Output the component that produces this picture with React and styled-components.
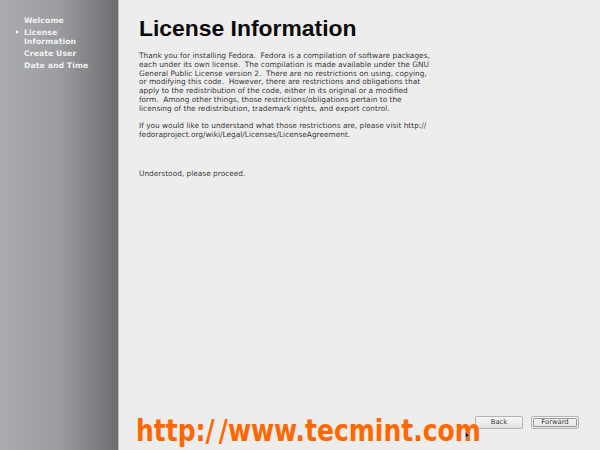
import styled, { createGlobalStyle } from 'styled-components';

const GlobalStyle = createGlobalStyle`
    html, body {
        margin: 0;
        padding: 0;
        width: 600px;
        height: 450px;
        overflow: hidden;
    }
    #root {
        height: 100%;
    }
`;

const Screen = styled.div`
    position: relative;
    display: flex;
    width: 600px;
    height: 450px;
    font-family: 'DejaVu Sans', sans-serif;
`;

const Sidebar = styled.nav`
    width: 119px;
    flex-shrink: 0;
    border-right: 1px solid #bdbdbf;
    background: linear-gradient(to right, #abacaf 0%, #9c9da0 50%, #6c6d6f 100%);
    padding: 15.5px 0 0 24px;
    box-sizing: border-box;
    display: flex;
    flex-direction: column;
    gap: 3.2px;
`;

const NavItem = styled.div`
    position: relative;
    font-size: 7.7px;
    font-weight: bold;
    line-height: 9px;
    color: #f1f1f1;
    letter-spacing: 0.1px;

    &::before {
        content: '';
        display: ${(p) => (p.$active ? 'block' : 'none')};
        position: absolute;
        left: -8px;
        top: 2px;
        border-left: 3px solid #f4f4f4;
        border-top: 2.5px solid transparent;
        border-bottom: 2.5px solid transparent;
    }
`;

const Content = styled.main`
    flex: 1;
    background: #ededed;
    padding: 15px 21px 21px 20px;
    display: flex;
    flex-direction: column;
`;

const Title = styled.h1`
    margin: 0 0 11px;
    font-family: 'Liberation Sans', Arial, sans-serif;
    font-size: 22.9px;
    font-weight: bold;
    line-height: 26px;
    color: #0a0a0a;
`;

const Paragraph = styled.p`
    margin: 0 0 ${(p) => p.$gap || 8.8}px;
    font-size: 7.4px;
    line-height: 8.8px;
    color: #3a3a3a;
    white-space: pre;
`;

const Line = styled.span`
    display: block;
`;

const Footer = styled.div`
    margin-top: auto;
    display: flex;
    justify-content: flex-end;
    gap: 8px;
`;

const Button = styled.button`
    position: relative;
    width: 48px;
    height: 13px;
    padding: 0;
    border: 1px solid #b4b4b4;
    border-radius: 2px;
    background: linear-gradient(to bottom, #f7f7f7, #e2e2e2);
    font-family: 'DejaVu Sans', sans-serif;
    font-size: 6.8px;
    line-height: 11px;
    color: #404040;

    &::after {
        content: '';
        display: ${(p) => (p.$focused ? 'block' : 'none')};
        position: absolute;
        inset: 1px;
        border: 1px solid #9a9a9a;
        border-radius: 1px;
    }
`;

const Watermark = styled.div`
    position: absolute;
    left: 136px;
    top: 419px;
    font-family: 'DejaVu Sans', sans-serif;
    font-weight: bold;
    font-size: 25px;
    line-height: 30px;
    color: #ff6700;
    transform: scaleY(1.2);
    transform-origin: left bottom;
    white-space: pre;
`;

const SlashGap = styled.span`
    margin-left: 4px;
`;

const Cursor = styled.svg`
    position: absolute;
    left: 465px;
    top: 431px;
`;

const licenseLines = [
    'Thank you for installing Fedora.  Fedora is a compilation of software packages,',
    'each under its own license.  The compilation is made available under the GNU',
    'General Public License version 2.  There are no restrictions on using, copying,',
    'or modifying this code.  However, there are restrictions and obligations that',
    'apply to the redistribution of the code, either in its original or a modified',
    'form.  Among other things, those restrictions/obligations pertain to the',
    'licensing of the redistribution, trademark rights, and export control.',
];

const visitLines = [
    'If you would like to understand what those restrictions are, please visit http://',
    'fedoraproject.org/wiki/Legal/Licenses/LicenseAgreement.',
];

export default function App() {
    return (
        <Screen>
            <GlobalStyle />
            <Sidebar>
                <NavItem>Welcome</NavItem>
                <NavItem $active>
                    License
                    <br />
                    Information
                </NavItem>
                <NavItem>Create User</NavItem>
                <NavItem>Date and Time</NavItem>
            </Sidebar>
            <Content>
                <Title>License Information</Title>
                <Paragraph>
                    {licenseLines.map((l) => (
                        <Line key={l}>{l}</Line>
                    ))}
                </Paragraph>
                <Paragraph $gap={30.4}>
                    {visitLines.map((l) => (
                        <Line key={l}>{l}</Line>
                    ))}
                </Paragraph>
                <Paragraph>Understood, please proceed.</Paragraph>
                <Footer>
                    <Button>Back</Button>
                    <Button $focused>Forward</Button>
                </Footer>
            </Content>
            <Watermark>
                http:/<SlashGap>/</SlashGap>www.tecmint.com
            </Watermark>
            <Cursor width="5" height="9" viewBox="0 0 5 9">
                <path d="M0.5 0.5 L0.5 7 L2 5.6 L3.2 8.5 L4 8.1 L2.9 5.3 L4.6 5.3 Z" fill="#111" stroke="#fff" strokeWidth="0.4" />
            </Cursor>
        </Screen>
    );
}
